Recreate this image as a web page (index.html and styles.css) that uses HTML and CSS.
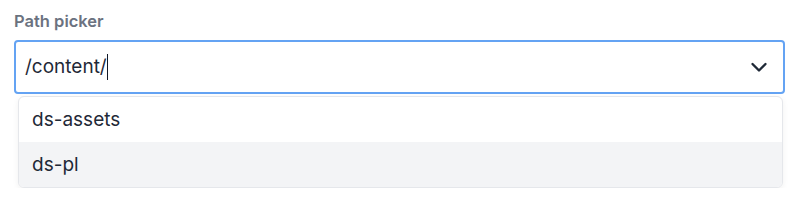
FILE: index.html
```html
<!DOCTYPE html>
<html lang="en">

<head>
    <meta charset="UTF-8">
    <meta name="viewport" content="width=device-width, initial-scale=1.0">
    <title>Path picker</title>
    <link rel="stylesheet" href="styles.css">
</head>

<body>
    <div class="field">
        <div class="field-label">Path picker</div>
        <div class="picker">
            <div class="picker-input">
                <span class="picker-value">/content/</span><span class="caret"></span>
                <svg class="chevron" width="18" height="18" viewBox="0 0 18 18" aria-hidden="true">
                    <path d="M2.5 6l6.5 6.5 6.5-6.5" fill="none" stroke="#1f2937" stroke-width="2.4" stroke-linecap="round" stroke-linejoin="round"/>
                </svg>
            </div>
            <div class="picker-menu">
                <div class="picker-option">ds-assets</div>
                <div class="picker-option hover">ds-pl</div>
            </div>
        </div>
    </div>
</body>

</html>
```

FILE: styles.css
```css
/**** DEFAULTS ****/

* {
    padding: 0;
    margin: 0;
    box-sizing: border-box;
}

html {
    font-family: Inter, "Noto Sans", sans-serif;
    color: #1f2937;
    background: #fff;
}

body {
    padding: 10px 15px 0 14px;
}

/**** FIELD ****/

.field-label {
    font-size: 16.5px;
    line-height: 22px;
    font-weight: 600;
    color: #6b7280;
    margin-bottom: 8px;
}

.picker-input {
    display: flex;
    align-items: center;
    height: 54px;
    border: 2px solid #64a3f3;
    border-radius: 4px;
    padding: 0 15px 0 9px;
    font-size: 19px;
}

.picker-value {
    line-height: 24px;
}

.caret {
    width: 1px;
    height: 26px;
    background: #111827;
}

.chevron {
    margin-left: auto;
}

/**** MENU ****/

.picker-menu {
    margin: 2px 2px 0 4px;
    background: #fff;
    border: 1px solid #e5e7eb;
    border-radius: 6px;
    box-shadow: 0 2px 6px rgba(0, 0, 0, 0.06);
    overflow: hidden;
}

.picker-option {
    height: 45px;
    line-height: 45px;
    padding-left: 13px;
    font-size: 19px;
}

.hover {
    background: #f3f4f6;
}
```
